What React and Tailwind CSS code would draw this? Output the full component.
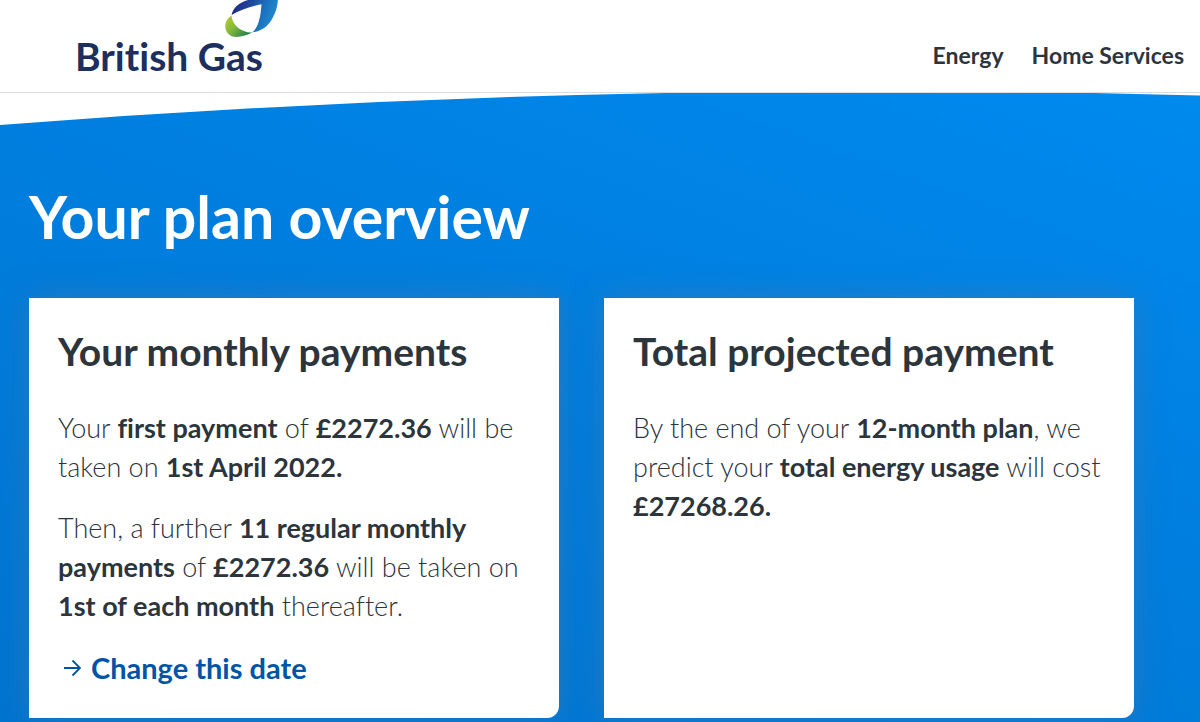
import React from 'react';

function Leaf() {
  return (
    <svg
      viewBox="0 0 54 38"
      className="absolute top-0 left-[149px] w-[54px] h-[38px]"
      aria-hidden="true"
    >
      <defs>
        <linearGradient id="leafBlue" x1="0" y1="0.2" x2="1" y2="0.5">
          <stop offset="0" stopColor="#1f2480" />
          <stop offset="0.4" stopColor="#1f4a9e" />
          <stop offset="0.7" stopColor="#1c72be" />
          <stop offset="1" stopColor="#1e8fd2" />
        </linearGradient>
        <linearGradient id="leafGreen" x1="0" y1="0" x2="1" y2="0.7">
          <stop offset="0" stopColor="#b9cf30" />
          <stop offset="0.45" stopColor="#86b93c" />
          <stop offset="1" stopColor="#1f7f4c" />
        </linearGradient>
      </defs>
      <path
        d="M7.500 15.500 C3 18.500 0.500 23.500 1.500 28.500 C2.500 33.500 7 37 12.500 37 C18 37 23.500 35 28.500 32.300 C24 33 19 31 15 28.500 C11 25.500 8 21 7.500 15.500 Z"
        fill="url(#leafGreen)"
      />
      <path
        d="M7.500 15 C9 8 15 2.500 24 0 L54 -4 C54 6 52 12 47.500 20 C43.500 26.500 37 31.500 28.500 32.300 C33 28.500 36.500 21 37.500 4.300 C27 6.500 16 10 7.500 15 Z"
        fill="url(#leafBlue)"
      />
    </svg>
  );
}

function Header() {
  return (
    <header className="flex items-start justify-between h-[93px] pl-[75px] pr-4 bg-white border-b border-[#dcdcdc]">
      <a href="#" className="relative block pt-9 text-[39px] leading-10 font-bold text-[#1d2f5e]">
        British Gas
        <Leaf />
      </a>
      <nav className="flex gap-7 pt-10 text-[23px] leading-[30px] font-bold">
        <a href="#">Energy</a>
        <a href="#">Home Services</a>
      </nav>
    </header>
  );
}

function Card({ title, children }) {
  return (
    <section className="px-[29px] pt-8 pb-[29px] min-h-[420px] bg-white rounded-br-xl shadow-[0_0_30px_rgba(80,120,160,0.5)]">
      <h2 className="text-[39px] leading-[42px] font-bold">{title}</h2>
      <div className="mt-9 space-y-[22px] text-[27px] leading-[39px] font-light">
        {children}
      </div>
    </section>
  );
}

function App() {
  return (
    <div className="font-['Lato',sans-serif] [font-variant-ligatures:none] text-[#2c353c]">
      <Header />
      <main className="min-h-[629px] pb-1 bg-linear-[20deg,#0074d0,#007fe0_60%,#008aee]">
        <svg viewBox="0 0 1200 32" preserveAspectRatio="none" className="block w-full h-8" aria-hidden="true">
          <path d="M0 0 V32 Q600 -14.400 1200 2.500 V0 Z" fill="#fff" />
        </svg>
        <div className="pl-[29px] pr-[66px] pt-14">
          <h1 className="text-[59px] leading-[72px] font-bold text-white">Your plan overview</h1>
          <div className="grid grid-cols-2 gap-[45px] mt-[45px]">
            <Card title="Your monthly payments">
              <p>
                Your <b className="font-bold">first payment</b> of <b className="font-bold">£2272.36</b> will be
                taken on <b className="font-bold">1st April 2022.</b>
              </p>
              <p>
                Then, a further <b className="font-bold">11 regular monthly payments</b> of{' '}
                <b className="font-bold">£2272.36</b> will be taken on{' '}
                <b className="font-bold">1st of each month</b> thereafter.
              </p>
              <a href="#" className="flex items-center gap-2.5 pl-1.5 text-[29px] leading-[42px] font-bold text-[#0054a6]">
                <svg viewBox="0 0 17 18" className="w-[17px] h-[18px]" fill="none" stroke="currentColor" strokeWidth="1.8" aria-hidden="true">
                  <path d="M0 9 H15.500 M8.500 1.500 L16 9 L8.500 16.500" />
                </svg>
                Change this date
              </a>
            </Card>
            <Card title="Total projected payment">
              <p>
                By the end of your <b className="font-bold">12-month plan</b>, we predict your{' '}
                <b className="font-bold">total energy usage</b> will cost{' '}
                <b className="font-bold">£27268.26.</b>
              </p>
            </Card>
          </div>
        </div>
      </main>
    </div>
  );
}

export default App;
